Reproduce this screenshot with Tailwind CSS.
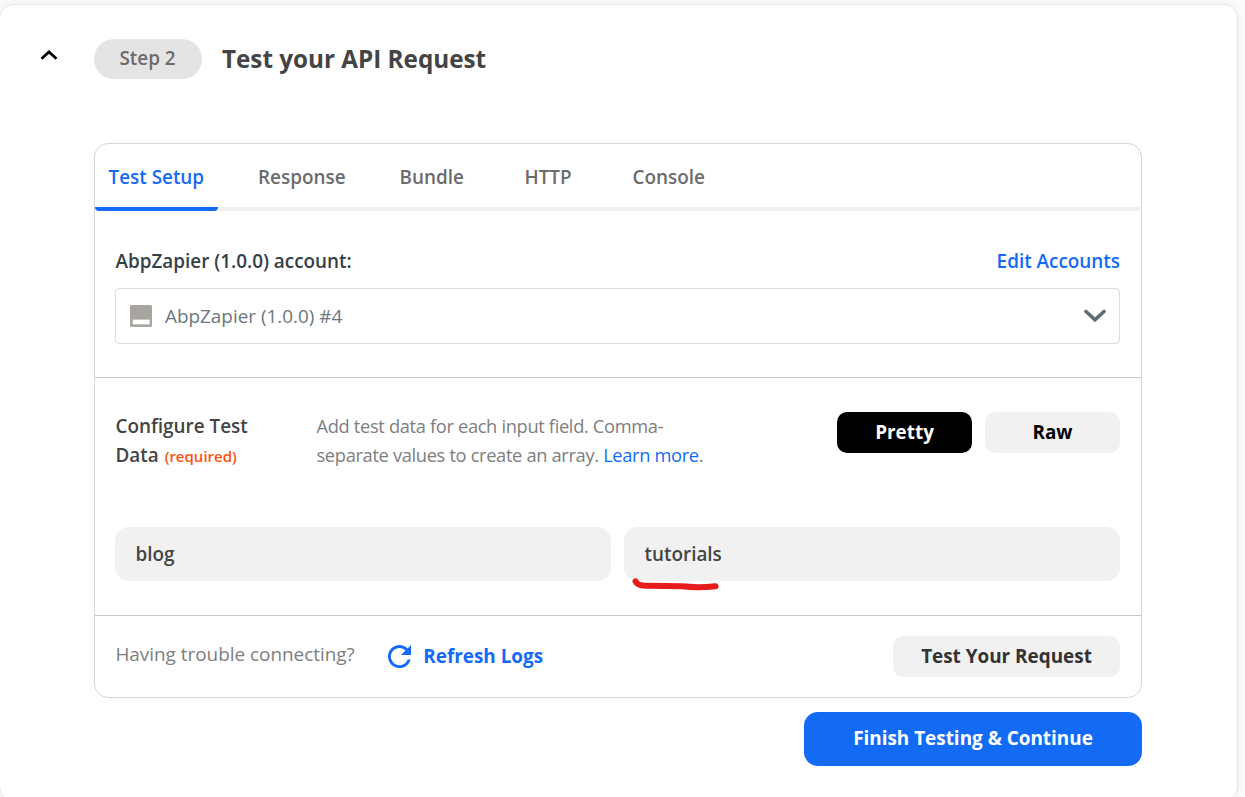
<!DOCTYPE html>
<html lang="en">
<head>
<meta charset="utf-8">
<title>Test your API Request</title>
<script src="https://cdn.jsdelivr.net/npm/@tailwindcss/browser@4"></script>
</head>
<body class="h-[797px] overflow-hidden bg-[#fcfcfc] pt-1 font-['Open_Sans',sans-serif] text-[18.9px] leading-[29px] text-[#444]">
<main class="-ml-px h-[797px] w-[1239px] rounded-[14px] border border-[#e6e6e6] bg-white pl-[94px] pr-24 pt-[34px] shadow-[0_0_14px_rgba(0,0,0,0.06)]">
  <header class="-ml-[54px] flex h-10 items-center">
    <svg class="mb-2 h-[10px] w-[18px]" viewBox="0 0 18 10" fill="none" stroke="#000" stroke-width="2.7"><path d="M1.5 8.8 9 1.9l7.5 6.9"/></svg>
    <span class="ml-9 flex h-10 w-[108px] items-center justify-center rounded-full bg-[#e4e4e4] pb-0.5 pr-px font-semibold text-[#6b6b6b]">Step 2</span>
    <h1 class="mb-0.5 ml-5 text-[24.25px] font-bold">Test your API Request</h1>
  </header>
  <section class="mt-16 h-[555px] w-[1048px] rounded-[14px] border border-[#d7d7d7]">
    <nav class="flex h-[67px] rounded-b-sm border-b-4 border-[#f1f1f1] font-semibold text-[#6b6b6b]">
      <div class="-mb-1 w-[123px] rounded-b-sm border-b-4 border-[#136bf5] pl-[13.5px] pt-[19px] whitespace-nowrap text-[#136bf5]">Test Setup</div>
      <div class="w-[141px] pl-10 pt-[19px]">Response</div>
      <div class="w-[126px] pl-[40.5px] pt-[19px]">Bundle</div>
      <div class="w-[107px] pl-[39.5px] pt-[19px]">HTTP</div>
      <div class="pl-[40.5px] pt-[19px]">Console</div>
    </nav>
    <div class="h-[167px] border-b border-[#c8c8c8] pl-5 pr-[21px] pt-9">
      <div class="flex justify-between pl-[0.4px] font-semibold text-[#354047]"><span>AbpZapier (1.0.0) account:</span><a class="text-[#136bf5]">Edit Accounts</a></div>
      <div class="mt-3 flex h-14 items-center rounded border border-[#d8dddf] pl-[14px] pr-3 text-[#6b777d]">
        <svg class="h-[22px] w-[22px]" viewBox="0 0 22 22"><rect width="22" height="22" rx="1.5" fill="#a8a49f"/><rect x="2.500" y="14.300" width="17.500" height="5.500" rx="1" fill="#d3d1ce"/><rect x="3" y="15" width="16.500" height="4" rx=".5" fill="#fff"/></svg>
        <span class="ml-[13px]">AbpZapier (1.0.0) #4</span>
        <svg class="ml-auto h-[14px] w-6" viewBox="0 0 24 14" fill="none" stroke="#5f6d72" stroke-width="3.6" stroke-linecap="round"><path d="m3 2.500 9 8.400 9-8.400"/></svg>
      </div>
    </div>
    <div class="h-[238px] border-b border-[#c8c8c8] pl-5 pr-[21px] pt-[34px]">
      <div class="flex h-[115px]">
        <div class="w-[201px] pl-[0.5px] font-semibold">Configure Test<br>Data <span class="ml-px text-[15px] text-[#fd5214]">(required)</span></div>
        <p class="-mt-px w-[521px] pl-[0.5px] text-[18.3px] tracking-[-0.34px] text-[#7e7e7e]">Add test data for each input field. Comma-<br>separate values to create an array. <a class="text-[#136bf5]">Learn more</a>.</p>
        <div class="flex gap-[13px] font-bold">
          <button class="h-[41px] w-[135px] rounded-[10px] bg-black text-white">Pretty</button>
          <button class="h-[41px] w-[135px] rounded-[10px] bg-[#f1f1f1] text-black">Raw</button>
        </div>
      </div>
      <div class="flex gap-[13px] font-semibold">
        <div class="flex h-[54px] w-[496px] items-center rounded-[14px] bg-[#f1f1f1] pl-[20.5px]">blog</div>
        <div class="relative flex h-[54px] w-[496px] items-center rounded-[14px] bg-[#f1f1f1] pl-[20.5px]">tutorials
          <svg class="absolute left-2 top-[50px] h-4 w-[90px]" viewBox="0 0 90 16" fill="none" stroke="#e81b1d" stroke-width="6" stroke-linecap="round" stroke-linejoin="round"><path d="M3.500 4.300Q5 8.500 14 8.800L50 9.300Q65 11 83.500 9.300"/></svg>
        </div>
      </div>
    </div>
    <div class="flex items-start pl-5 pr-[21px] pt-5">
      <span class="mt-1 pl-[0.4px] text-[#7e7e7e]">Having trouble connecting?</span>
      <svg class="ml-[33px] mt-[9px] h-[23px] w-[23px]" viewBox="4 4 16 16" fill="#136bf5"><path d="M17.65 6.350C16.200 4.900 14.210 4 12 4c-4.420 0-7.990 3.580-7.990 8s3.570 8 7.990 8c3.730 0 6.840-2.550 7.730-6h-2.080c-.82 2.330-3.040 4-5.650 4-3.310 0-6-2.690-6-6s2.690-6 6-6c1.660 0 3.140.69 4.220 1.780L13 11h7V4l-2.350 2.350z"/></svg>
      <span class="ml-[12.5px] mt-1.5 font-bold text-[#136bf5]">Refresh Logs</span>
      <button class="ml-auto h-[41px] w-[227px] rounded-[10px] bg-[#f1f1f1] font-bold text-[#333]">Test Your Request</button>
    </div>
  </section>
  <button class="ml-[710px] mt-[14px] h-[54px] w-[338px] rounded-[14px] bg-[#136bf5] pb-px font-bold text-white">Finish Testing &amp; Continue</button>
</main>
</body>
</html>
